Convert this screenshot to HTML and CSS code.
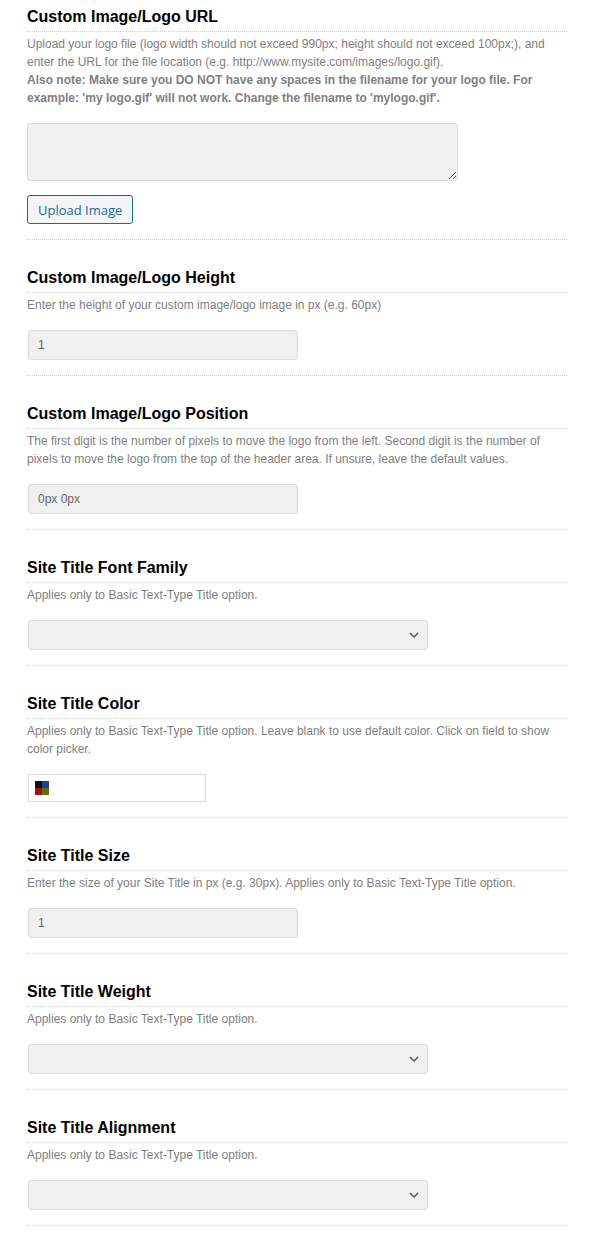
FILE: index.html
```html
<!DOCTYPE html>
<html lang="en">
<head>
    <meta charset="UTF-8">
    <meta name="viewport" content="width=device-width, initial-scale=1.0">
    <title>Header Options</title>
    <link rel="stylesheet" href="styles.css">
</head>
<body>

<div class="options">
    <!-- Logo URL -->
    <div class="option">
        <h3>Custom Image/Logo URL</h3>
        <p class="desc">Upload your logo file (logo width should not exceed 990px; height should not exceed 100px;), and enter the URL for the file location (e.g. http://www.mysite.com/images/logo.gif).<br>
        <strong>Also note: Make sure you DO NOT have any spaces in the filename for your logo file. For example: 'my logo.gif' will not work. Change the filename to 'mylogo.gif'.</strong></p>
        <textarea class="field-area"></textarea>
        <button class="upload">Upload Image</button>
    </div>

    <div class="option">
        <h3>Custom Image/Logo Height</h3>
        <p class="desc">Enter the height of your custom image/logo image in px (e.g. 60px)</p>
        <input type="text" class="field-text" value="1">
    </div>

    <div class="option">
        <h3>Custom Image/Logo Position</h3>
        <p class="desc">The first digit is the number of pixels to move the logo from the left. Second digit is the number of pixels to move the logo from the top of the header area. If unsure, leave the default values.</p>
        <input type="text" class="field-text" value="0px 0px">
    </div>

    <div class="option">
        <h3>Site Title Font Family</h3>
        <p class="desc">Applies only to Basic Text-Type Title option.</p>
        <div class="select-wrap">
            <select class="field-select"><option></option></select>
            <svg class="chevron" width="10" height="6" viewBox="0 0 10 6"><path d="M1 1l4 4 4-4" fill="none" stroke="#555" stroke-width="1.5"/></svg>
        </div>
    </div>

    <div class="option">
        <h3>Site Title Color</h3>
        <p class="desc">Applies only to Basic Text-Type Title option. Leave blank to use default color. Click on field to show color picker.</p>
        <div class="field-color">
            <span class="swatch"><i class="q1"></i><i class="q2"></i><i class="q3"></i><i class="q4"></i></span>
        </div>
    </div>

    <div class="option">
        <h3>Site Title Size</h3>
        <p class="desc">Enter the size of your Site Title in px (e.g. 30px). Applies only to Basic Text-Type Title option.</p>
        <input type="text" class="field-text" value="1">
    </div>

    <div class="option">
        <h3>Site Title Weight</h3>
        <p class="desc">Applies only to Basic Text-Type Title option.</p>
        <div class="select-wrap">
            <select class="field-select"><option></option></select>
            <svg class="chevron" width="10" height="6" viewBox="0 0 10 6"><path d="M1 1l4 4 4-4" fill="none" stroke="#555" stroke-width="1.5"/></svg>
        </div>
    </div>

    <div class="option">
        <h3>Site Title Alignment</h3>
        <p class="desc">Applies only to Basic Text-Type Title option.</p>
        <div class="select-wrap">
            <select class="field-select"><option></option></select>
            <svg class="chevron" width="10" height="6" viewBox="0 0 10 6"><path d="M1 1l4 4 4-4" fill="none" stroke="#555" stroke-width="1.5"/></svg>
        </div>
    </div>
</div>

</body>
</html>
```

FILE: styles.css
```css
body {
    font-family: "Liberation Sans", Arial, sans-serif;
    margin: 0;
    background-color: #fff;
}
.options {
    width: 540px;
    margin-left: 27px;
}
.option {
    padding: 28px 0 15px;
    border-bottom: 1px dotted #d0d0d0;
}
.option:first-child {
    padding-top: 7px;
}
.option h3 {
    margin: 0;
    padding-bottom: 4px;
    font-size: 16px;
    line-height: 20px;
    font-weight: bold;
    color: #000;
    border-bottom: 1px dotted #d0d0d0;
}
.desc {
    margin: 3px 0 16px;
    font-size: 12px;
    line-height: 18px;
    color: #808080;
}
.field-area {
    display: block;
    box-sizing: border-box;
    width: 431px;
    height: 58px;
    margin: 0;
    border: 1px solid #ddd;
    border-radius: 3px;
    background-color: #f0f0f0;
}
.upload {
    display: block;
    box-sizing: border-box;
    height: 29px;
    margin-top: 14px;
    padding: 0 10px;
    font-family: "Open Sans", sans-serif;
    font-size: 13px;
    color: #1d6a8e;
    background-color: #f3f5f6;
    border: 1px solid #1d6a8e;
    border-radius: 3px;
}
.field-text {
    display: block;
    box-sizing: border-box;
    width: 270px;
    height: 30px;
    margin: 0 0 0 1px;
    padding: 0 9px;
    font-family: "Liberation Sans", Arial, sans-serif;
    font-size: 12px;
    color: #666;
    background-color: #f0f0f0;
    border: 1px solid #ddd;
    border-radius: 3px;
    box-shadow: inset 0 1px 2px rgba(0, 0, 0, 0.04);
}
.select-wrap {
    position: relative;
    width: 400px;
    margin-left: 1px;
}
.field-select {
    display: block;
    box-sizing: border-box;
    width: 400px;
    height: 30px;
    margin: 0;
    background-color: #f0f0f0;
    border: 1px solid #ddd;
    border-radius: 3px;
    appearance: none;
    -webkit-appearance: none;
}
.chevron {
    position: absolute;
    right: 9px;
    top: 12px;
}
.field-color {
    box-sizing: border-box;
    width: 178px;
    height: 28px;
    margin-left: 1px;
    padding: 6px 0 0 6px;
    border: 1px solid #ddd;
    background-color: #fff;
}
.swatch {
    display: grid;
    grid-template-columns: 7px 7px;
    grid-template-rows: 7px 7px;
    width: 14px;
    height: 14px;
}
.swatch i { display: block; }
.q1 { background-color: #111; }
.q2 { background-color: #1144a8; }
.q3 { background-color: #a8100e; }
.q4 { background-color: #6d6a12; }
```
